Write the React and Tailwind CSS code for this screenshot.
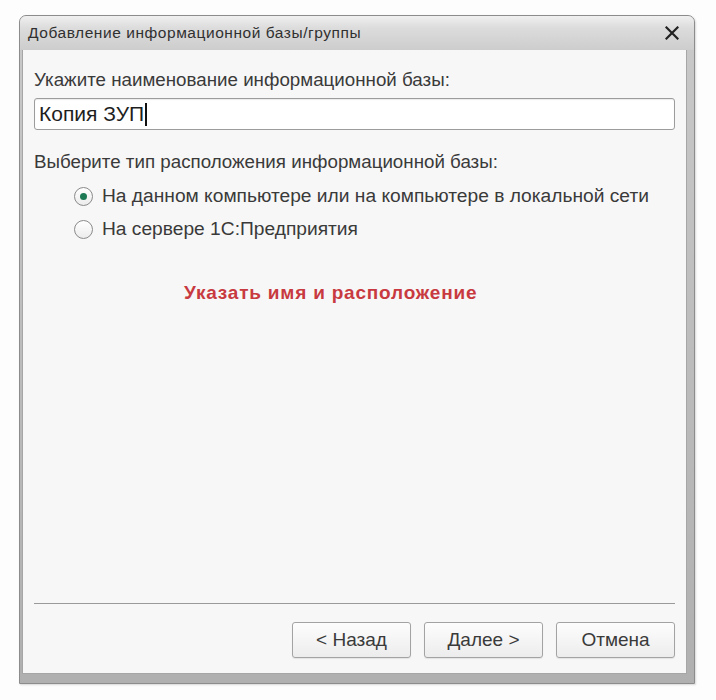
export default function App() {
  const font = { fontFamily: '"Liberation Sans", Arial, sans-serif' };
  return (
    <div className="w-[716px] h-[700px] bg-[#fdfdfd] pt-[15px] pl-[19px]" style={font}>
      <div className="w-[676px] h-[669px] flex flex-col rounded-t-[7px] border border-[#8c8c8c] bg-[linear-gradient(to_bottom,#c9c9c9,#b0b0b0)] shadow-[1px_1px_2px_rgba(0,0,0,0.15)]">
        <div className="h-[34px] shrink-0 flex items-center justify-between pl-[8px] pr-[12px] rounded-t-[6px] bg-[linear-gradient(to_bottom,#f0f0f0,#dcdcdc_35%,#cdcdcd)]">
          <span className="text-[15.5px] text-[#303030] tracking-[0.55px]">Добавление информационной базы/группы</span>
          <svg width="14" height="14" viewBox="0 0 14 14" className="mr-[3px]">
            <path d="M1.5 1.5 L12.5 12.5 M12.5 1.5 L1.5 12.5" stroke="#222" strokeWidth="2.2" strokeLinecap="square" />
          </svg>
        </div>
        <div className="flex-1 flex flex-col ml-[2px] mr-[7px] mb-[9px] bg-[#f7f7f7] border-l border-r border-b border-[#a6a6a6] pl-[11px] pr-[11px] pb-[15px]">
          <div className="mt-[20px] h-[20px] leading-[20px] text-[18.75px] text-[#3a3a3a]">Укажите наименование информационной базы:</div>
          <div className="mt-[8px] h-[32px] rounded-[3px] border border-[#9c9c9c] bg-white flex items-center pl-[4px] shadow-[inset_0_1px_1px_rgba(0,0,0,0.08)]">
            <span className="text-[21px] text-[#1e1e1e] leading-[22px]">Копия ЗУП</span>
            <span className="w-[2px] h-[23px] bg-[#111] ml-[1px]"></span>
          </div>
          <div className="mt-[22px] h-[20px] leading-[20px] text-[18.75px] text-[#3a3a3a]">Выберите тип расположения информационной базы:</div>
          <div className="mt-[12px] h-[24px] flex items-center pl-[40px]">
            <div className="w-[19px] h-[19px] rounded-full border border-[#8a8a8a] bg-[linear-gradient(to_bottom,#ffffff,#ececec)] flex items-center justify-center">
              <div className="w-[7px] h-[7px] rounded-full bg-[#1d7a55]"></div>
            </div>
            <span className="ml-[9px] text-[19.2px] text-[#3a3a3a] leading-[20px]">На данном компьютере или на компьютере в локальной сети</span>
          </div>
          <div className="mt-[9px] h-[24px] flex items-center pl-[40px]">
            <div className="w-[19px] h-[19px] rounded-full border border-[#8a8a8a] bg-[linear-gradient(to_bottom,#ffffff,#ececec)]"></div>
            <span className="ml-[9px] text-[19.2px] text-[#3a3a3a] leading-[20px]">На сервере 1С:Предприятия</span>
          </div>
          <div className="mt-[40px] h-[24px] leading-[24px] pl-[150px] text-[19px] tracking-[0.8px] font-bold text-[#c83a40]">Указать имя и расположение</div>
          <div className="flex-1"></div>
          <div className="h-px bg-[#9a9a9a]"></div>
          <div className="mt-[18px] flex justify-end gap-[13px]">
            {["< Назад", "Далее >", "Отмена"].map((t) => (
              <div key={t} className="w-[119px] h-[36px] rounded-[3px] border border-[#a3a3a3] bg-[linear-gradient(to_bottom,#fdfdfd,#ececec)] flex items-center justify-center text-[19px] text-[#3a3a3a] shadow-[0_1px_1px_rgba(0,0,0,0.08)]">
                {t}
              </div>
            ))}
          </div>
        </div>
      </div>
    </div>
  );
}
